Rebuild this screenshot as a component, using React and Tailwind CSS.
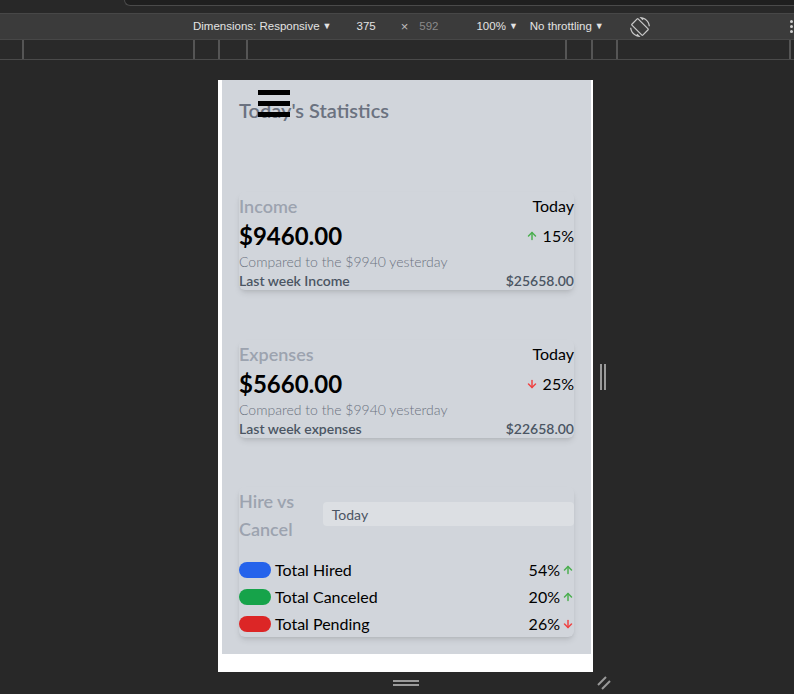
import React from 'react';
import { ArrowUp, ArrowDown } from 'lucide-react';
import { MdScreenRotation } from 'react-icons/md';

const stats = [
  { label: 'Income', amount: '$9460.00', change: '15%', up: true, lastLabel: 'Last week Income', last: '$25658.00' },
  { label: 'Expenses', amount: '$5660.00', change: '25%', up: false, lastLabel: 'Last week expenses', last: '$22658.00' },
];

const hires = [
  { label: 'Total Hired', value: '54%', up: true, color: 'bg-[#2563eb]' },
  { label: 'Total Canceled', value: '20%', up: true, color: 'bg-[#16a34a]' },
  { label: 'Total Pending', value: '26%', up: false, color: 'bg-[#dc2626]' },
];

const Trend = ({ up, size = 12 }) =>
  up ? (
    <ArrowUp size={size} strokeWidth={3} className="text-[#4caf50]" />
  ) : (
    <ArrowDown size={size} strokeWidth={3} className="text-[#ef4444]" />
  );

const StatCard = ({ item }) => (
  <div className="mb-[50px] shadow-md rounded-md">
    <div className="flex h-[28px] items-center justify-between">
      <span className="text-[18px] font-semibold text-[#9ca3af]">{item.label}</span>
      <span className="text-[16px] text-black">Today</span>
    </div>
    <div className="flex h-[32px] items-center justify-between">
      <span className="text-[24px] font-bold text-black">{item.amount}</span>
      <span className="flex items-center gap-[5px] text-[16px] text-black">
        <Trend up={item.up} />
        {item.change}
      </span>
    </div>
    <div className="flex h-[18px] items-center text-[14px] font-light text-[#6b7280]">
      Compared to the $9940 yesterday
    </div>
    <div className="flex h-[20px] items-center justify-between text-[14px] font-semibold text-[#4b5563]">
      <span>{item.lastLabel}</span>
      <span>{item.last}</span>
    </div>
  </div>
);

const PhonePage = () => (
  <div className="h-[592px] w-[375px] bg-white" style={{ fontFamily: 'Lato, "Noto Sans", sans-serif' }}>
    <div className="ml-[4px] mr-[2px] h-[574px] overflow-hidden bg-[#d1d5db] px-[17px]">
      {/* header */}
      <div className="relative pt-[16px]">
        <div className="absolute left-[19px] top-[10px] flex w-[32px] flex-col gap-[6px]">
          <div className="h-[5px] bg-black" />
          <div className="h-[5px] bg-black" />
          <div className="h-[5px] bg-black" />
        </div>
        <h1 className="text-[20px] font-semibold leading-[28px] text-[#6b7280]">Today's Statistics</h1>
      </div>

      <div className="mt-[68px]">
        {stats.map((s) => (
          <StatCard key={s.label} item={s} />
        ))}

        {/* hire vs cancel */}
        <div className="-mt-[1px] rounded-md shadow-md">
          <div className="flex items-center">
            <div className="w-1/4 text-[18px] font-semibold leading-[28px] text-[#9ca3af]">Hire vs Cancel</div>
            <div className="mb-[2px] flex h-[24px] flex-1 items-center rounded-sm bg-[#dcdfe3] pl-[9px] text-[14px] text-[#4b5563]">
              Today
            </div>
          </div>
          <div className="mt-[13px]">
            {hires.map((h) => (
              <div key={h.label} className="flex h-[27px] items-center justify-between">
                <div className="flex items-center gap-[4px]">
                  <span className={`h-[16px] w-[32px] rounded-full ${h.color}`} />
                  <span className="text-[16px] text-black">{h.label}</span>
                </div>
                <span className="flex items-center gap-[2px] text-[16px] text-black">
                  {h.value}
                  <Trend up={h.up} />
                </span>
              </div>
            ))}
          </div>
        </div>
      </div>
    </div>
  </div>
);

const rulerTicks = [22, 193, 218, 246, 565, 591, 616, 789];

export default function App() {
  return (
    <div
      className="flex h-[694px] w-[794px] flex-col overflow-hidden bg-[#282828]"
      style={{ fontFamily: '"Liberation Sans", Arial, sans-serif' }}
    >
      {/* top strip */}
      <div className="flex h-[13px] bg-[#282828] pl-[124px]">
        <div className="h-[6px] flex-1 rounded-bl-[10px] border-b border-l border-[#4a4a4a] bg-[#1f1f1f]" />
      </div>

      {/* toolbar */}
      <div className="flex h-[27px] items-center border-t border-b border-[#474747] bg-[#3b3b3b] pl-[193px] text-[11.5px] text-[#e3e3e3]">
        <span>Dimensions: Responsive</span>
        <span className="ml-[3px] text-[9px]">▼</span>
        <span className="ml-[25px]">375</span>
        <span className="ml-[25px] text-[13px] text-[#bdbdbd]">×</span>
        <span className="ml-[11px] text-[#8a8a8a]">592</span>
        <span className="ml-[38px]">100%</span>
        <span className="ml-[3px] text-[9px]">▼</span>
        <span className="ml-[12px]">No throttling</span>
        <span className="ml-[3px] text-[9px]">▼</span>
        <MdScreenRotation size={20} className="ml-[26px] text-[#c8c8c8]" />
        <div className="ml-auto mr-[1px] flex flex-col gap-[2px]">
          <div className="h-[3px] w-[3px] rounded-full bg-[#d0d0d0]" />
          <div className="h-[3px] w-[3px] rounded-full bg-[#d0d0d0]" />
          <div className="h-[3px] w-[3px] rounded-full bg-[#d0d0d0]" />
        </div>
      </div>

      {/* ruler */}
      <div className="relative h-[20px] border-b border-[#4a4a4a] bg-[#292929]">
        {rulerTicks.map((x) => (
          <div key={x} className="absolute top-0 h-[19px] w-[2px] bg-[#555]" style={{ left: x }} />
        ))}
      </div>

      {/* viewport */}
      <div className="flex flex-1 pl-[218px] pt-[20px]">
        <div className="flex flex-col items-center">
          <PhonePage />
          <div className="mt-[8px] flex w-[26px] flex-col gap-[2px]">
            <div className="h-[2px] bg-[#9a9a9a]" />
            <div className="h-[2px] bg-[#9a9a9a]" />
          </div>
        </div>
        <div className="flex flex-col pl-[7px]">
          <div className="mt-[284px] flex h-[26px] gap-[2px]">
            <div className="w-[2px] bg-[#9a9a9a]" />
            <div className="w-[2px] bg-[#9a9a9a]" />
          </div>
          <svg width="14" height="14" viewBox="0 0 14 14" className="ml-[-3px] mt-[286px]">
            <line x1="1" y1="9" x2="9" y2="1" stroke="#9a9a9a" strokeWidth="2" />
            <line x1="5" y1="13" x2="13" y2="5" stroke="#9a9a9a" strokeWidth="2" />
          </svg>
        </div>
      </div>
    </div>
  );
}
